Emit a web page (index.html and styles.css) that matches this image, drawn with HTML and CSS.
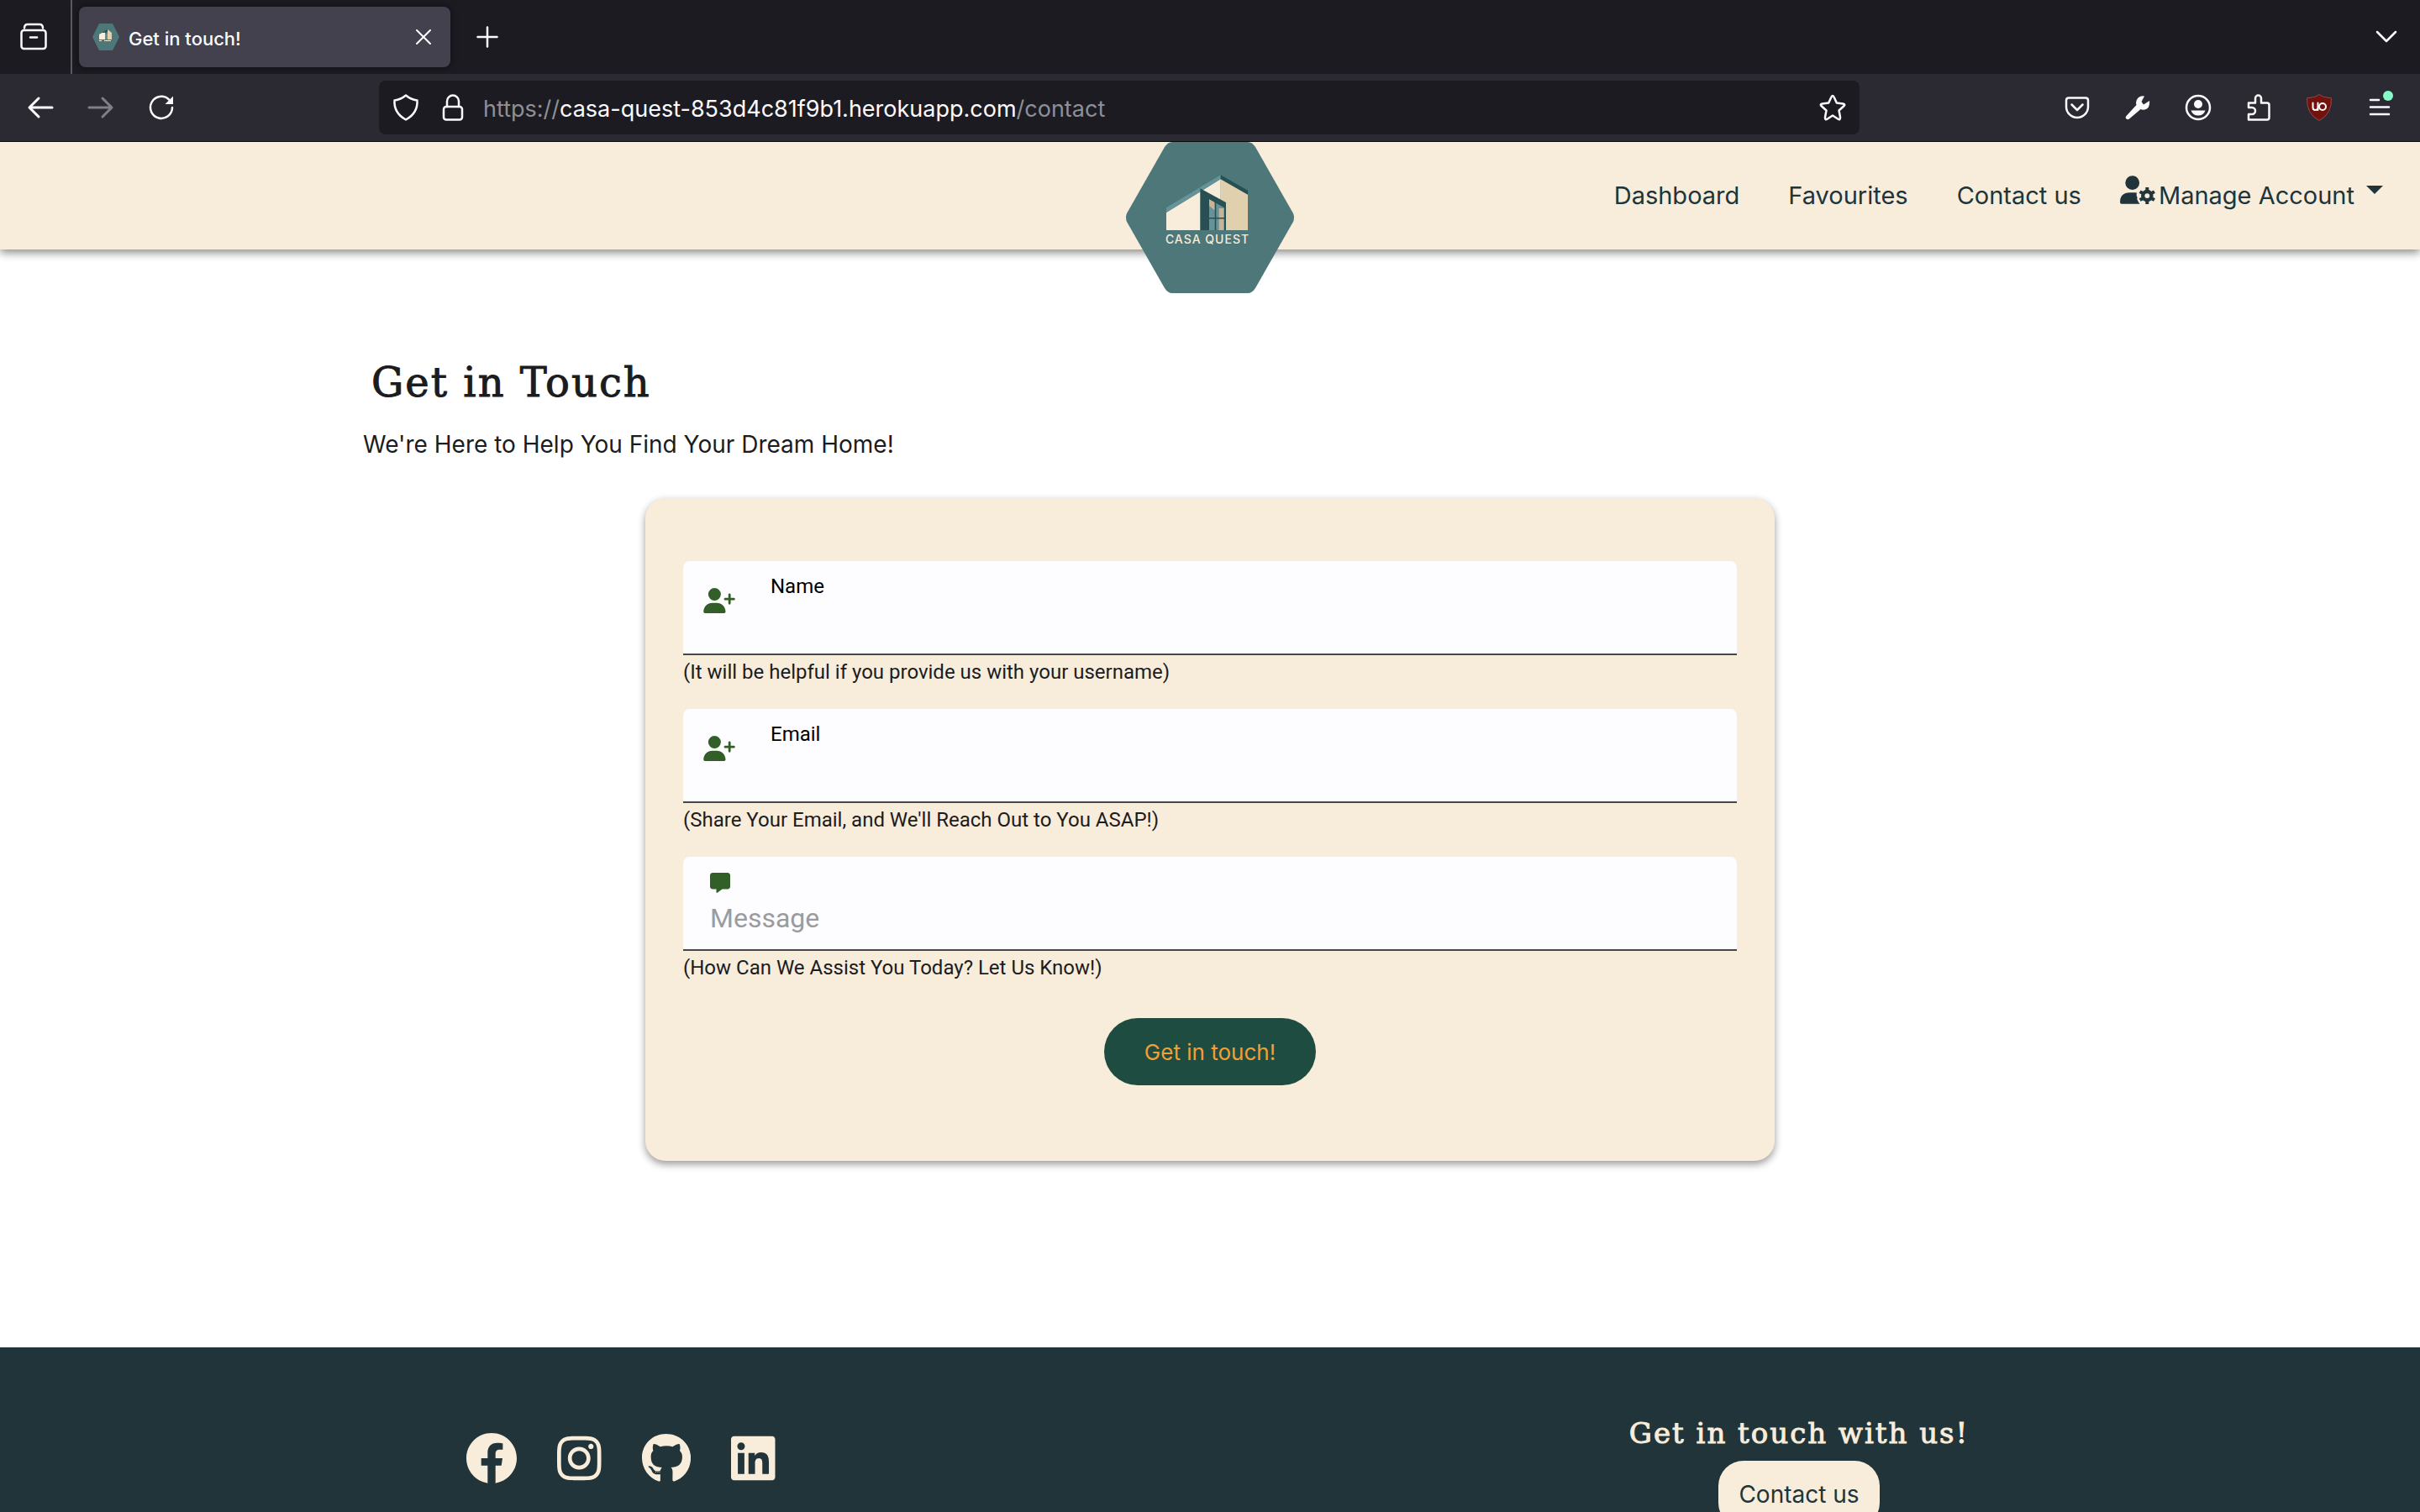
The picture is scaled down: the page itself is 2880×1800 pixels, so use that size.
FILE: index.html
```html
<!DOCTYPE html>
<html lang="en">
<head>
<meta charset="utf-8">
<meta name="viewport" content="width=device-width, initial-scale=1">
<title>Get in touch!</title>
<link rel="stylesheet" href="styles.css">
</head>
<body>
<div class="browser">
  <div class="tabstrip">
    <button class="view-button" type="button" aria-label="Recent browsing">
      <svg class="icon" viewBox="0 0 32 32"><path d="M5 5.500Q5 1 9 1h14q4 0 4 4.500"/><rect x="1.500" y="8" width="29" height="22" rx="3"/><path d="M12 16.500h8"/></svg>
    </button>
    <div class="tab">
      <svg class="favicon" viewBox="0 0 32 32"><path fill="#4e777a" d="M8 0h16l8 16-8 16H8L0 16z"/><path fill="#f8ecdb" d="M8 13l7-4v10H8zM8 20h3v1H8zM14 20h8v1h-8z"/><path fill="#284f52" d="M11 11l7-4v3l-4 1z"/><path fill="#5f8f95" d="M15 12h3v7h-3z"/><path fill="#e0d0ae" d="M18 7l5 4v8h-5z"/></svg>
      <span class="tab-title">Get in touch!</span>
      <button class="tab-close" type="button" aria-label="Close tab"><svg class="icon thin" viewBox="0 0 32 32"><path d="M8 8l16 16M24 8L8 24"/></svg></button>
    </div>
    <button class="new-tab" type="button" aria-label="New tab"><svg class="icon" viewBox="0 0 32 32"><path d="M16 4.500v23M4.500 16h23"/></svg></button>
    <button class="all-tabs" type="button" aria-label="List all tabs"><svg class="icon" viewBox="0 0 32 32"><path d="M5 10l11 11 11-11"/></svg></button>
  </div>
  <div class="toolbar">
    <button class="tool" type="button" aria-label="Back"><svg class="icon heavy" viewBox="0 0 32 32"><path d="M30 16H3M14 5L3 16l11 11"/></svg></button>
    <button class="tool" type="button" aria-label="Forward" disabled><svg class="icon heavy" viewBox="0 0 32 32"><path d="M2 16h27M18 5l11 11-11 11"/></svg></button>
    <button class="tool" type="button" aria-label="Reload"><svg class="icon" viewBox="0 0 32 32"><path d="M29 16a13 13 0 1 1-4-9.500"/><path class="solid" d="M30 2.500v9.500h-9.500z"/></svg></button>
    <div class="urlbar">
      <svg class="icon" viewBox="0 0 32 32"><path d="M16 1.500q6 5 13.500 6 1 15-13.500 23Q1.500 22.500 2.500 7.500 10 6.500 16 1.500z"/></svg>
      <svg class="icon lock" viewBox="0 0 32 32"><rect x="5" y="15" width="22" height="15.500" rx="3"/><path d="M9 15V8.500a7 7 0 0 1 14 0V15"/></svg>
      <span class="url">https://<b>casa-quest-853d4c81f9b1.herokuapp.com</b>/contact</span>
      <svg class="icon" viewBox="0 0 32 32"><path d="M16 2q1 0 1.800 2l3 6.500 7.700 1q3 .700.800 2.800l-5.800 5.200 1.500 8c.400 2.500-.800 3.200-2.500 2.200L16 25.500l-6.500 4.200c-1.700 1-2.900.300-2.500-2.200l1.500-8-5.800-5.200q-2.200-2.100.800-2.800l7.700-1 3-6.500Q15 2 16 2z"/></svg>
    </div>
    <button class="tool" type="button" aria-label="Save to Pocket"><svg class="icon" viewBox="0 0 32 32"><path d="M6 4.500h20q3 0 3 3V15a13 13 0 0 1-26 0V7.500q0-3 3-3z"/><path d="M9.500 12.500l6.500 6.500 6.500-6.500"/></svg></button>
    <button class="tool" type="button" aria-label="Developer tools"><svg class="icon" viewBox="0 0 32 32"><path class="solid" d="M24 2.500l-3.500 6.500 2.500 3.500L30 8q1 9-5.500 10.500-3 .500-5-.500L6 29.500q-2.500 1.500-4-.500-.800-1.500.500-3L14.500 13Q13 8 16.500 4.500 20 1.500 24 2.500z"/></svg></button>
    <button class="tool" type="button" aria-label="Account"><svg class="icon" viewBox="0 0 32 32"><circle cx="16" cy="16" r="14"/><circle class="solid" cx="16" cy="12" r="5"/><path class="solid" d="M7.500 19.500h17q-2 6-8.500 6t-8.500-6z"/></svg></button>
    <button class="tool" type="button" aria-label="Extensions"><svg class="icon" viewBox="0 0 32 32"><path d="M4 10.500h8V5a3.500 3.500 0 0 1 7 0v5.500h7q2.500 0 2.500 2.500v15q0 2.500-2.500 2.500H4V24h4a4 4 0 0 0 0-8H4z"/></svg></button>
    <button class="tool" type="button" aria-label="uBlock Origin"><svg class="icon thin" viewBox="0 0 32 32"><path class="badge" d="M16 .500q5 4 14.500 4 1 19-14.500 27Q.500 23.500 1.500 4.500 11 4.500 16 .500z"/><path d="M8.500 10.500v5.500q0 3 3 3t3-3v-5.500M14.500 10.500V19"/><circle cx="20" cy="15" r="4"/></svg></button>
    <button class="tool" type="button" aria-label="Open menu"><svg class="icon menu" viewBox="0 0 32 32"><path d="M5 7h10M5 15.500h22M5 24h22"/><circle cx="26" cy="2" r="6"/></svg></button>
  </div>

  <div class="viewport">
    <header class="navbar">
      <a class="brand" href="#">
        <svg viewBox="0 0 200 180" role="img" aria-label="Casa Quest">
          <path fill="#4e777a" d="M55 0h90q5 0 9 6l45 79q2 5 0 10l-45 79q-4 6-9 6H55q-5 0-9-6L1 95q-2-5 0-10L46 6q4-6 9-6z"/>
          <path fill="#f8ecdb" d="M48 84l40-24.500L112.700 44v61H48z"/>
          <path fill="#e0d0ae" d="M112.700 44L145 62.500V105h-32.300z"/>
          <path fill="#66939a" d="M48 78.300l64.700-39v5L48 84z"/>
          <path fill="#284f52" d="M112.700 39.300L145 57.700v5l-32.300-18.400z"/>
          <path fill="#284f52" d="M88.300 55.300L119 72v33H88.300z"/>
          <path fill="#66939a" d="M99 68.300l18 10V105H99z"/>
          <path fill="#c9b391" d="M99 68.300l6.700 3.700v9.500L99 76zM110.700 79h5.600v26h-5.600z"/>
          <path fill="#284f52" d="M105.700 70h1.600v35h-1.600zM99 90h18v1.400H99z"/>
          <text class="brand-name" x="97" y="121" text-anchor="middle">CASA QUEST</text>
        </svg>
      </a>
      <nav class="links">
        <a href="#">Dashboard</a>
        <a href="#">Favourites</a>
        <a href="#">Contact us</a>
        <a class="account" href="#">
          <svg class="account-icon" viewBox="0 0 640 512"><path d="M224 0a128 128 0 1 1 0 256 128 128 0 1 1 0-256zM178 304h92q20 0 36 4-18 50 8 84-10 30 6 60 14 34 40 60H30q-30 0-30-30 0-178 178-178z"/><circle cx="492" cy="364" r="78" fill="none" stroke="currentColor" stroke-width="66"/><path fill="none" stroke="currentColor" stroke-width="60" d="M492 212v50M492 466v50M360 288l44 25M580 415l44 25M360 440l44-25M580 313l44-25"/></svg>
          <span>Manage Account</span>
          <svg class="caret" viewBox="0 0 20 10"><path d="M0 0h20L10 10z"/></svg>
        </a>
      </nav>
    </header>

    <main class="page">
      <h1>Get in Touch</h1>
      <p class="lead">We're Here to Help You Find Your Dream Home!</p>
      <form class="card">
        <div class="field-group">
          <div class="field">
            <svg class="field-icon" viewBox="0 0 640 512"><path d="M224 0a128 128 0 1 1 0 256 128 128 0 1 1 0-256zM0 482.300C0 383.800 79.800 304 178.300 304h91.400C368.200 304 448 383.800 448 482.300c0 16.400-13.300 29.700-29.700 29.700H29.700C13.300 512 0 498.700 0 482.300zM504 312V248H440c-13.300 0-24-10.700-24-24s10.700-24 24-24h64V136c0-13.300 10.700-24 24-24s24 10.700 24 24v64h64c13.300 0 24 10.700 24 24s-10.700 24-24 24H552v64c0 13.300-10.700 24-24 24s-24-10.700-24-24z"/></svg>
            <div class="field-body"><label for="name">Name</label><input id="name" type="text"></div>
          </div>
          <p class="hint">(It will be helpful if you provide us with your username)</p>
        </div>
        <div class="field-group">
          <div class="field">
            <svg class="field-icon" viewBox="0 0 640 512"><path d="M224 0a128 128 0 1 1 0 256 128 128 0 1 1 0-256zM0 482.300C0 383.800 79.800 304 178.300 304h91.400C368.200 304 448 383.800 448 482.300c0 16.400-13.300 29.700-29.700 29.700H29.700C13.300 512 0 498.700 0 482.300zM504 312V248H440c-13.300 0-24-10.700-24-24s10.700-24 24-24h64V136c0-13.300 10.700-24 24-24s24 10.700 24 24v64h64c13.300 0 24 10.700 24 24s-10.700 24-24 24H552v64c0 13.300-10.700 24-24 24s-24-10.700-24-24z"/></svg>
            <div class="field-body"><label for="email">Email</label><input id="email" type="email"></div>
          </div>
          <p class="hint">(Share Your Email, and We'll Reach Out to You ASAP!)</p>
        </div>
        <div class="field-group">
          <div class="field message">
            <label for="message" aria-label="Message"><svg class="message-icon" viewBox="0 0 512 512"><path d="M64 0C28.700 0 0 28.700 0 64V352c0 35.300 28.700 64 64 64h96v80c0 6.100 3.400 11.600 8.800 14.300s11.900 2.100 16.800-1.500L309.300 416H448c35.300 0 64-28.700 64-64V64c0-35.300-28.700-64-64-64H64z"/></svg></label>
            <textarea id="message" rows="1" placeholder="Message"></textarea>
          </div>
          <p class="hint">(How Can We Assist You Today? Let Us Know!)</p>
        </div>
        <button class="submit" type="submit">Get in touch!</button>
      </form>
    </main>

    <footer class="footer">
      <div class="social">
        <a href="#" aria-label="Facebook"><svg viewBox="8 8 496 496"><path d="M504 256C504 119 393 8 256 8S8 119 8 256c0 123.780 90.690 226.380 209.250 245V327.690h-63V256h63v-54.640c0-62.150 37-96.480 93.670-96.480 27.140 0 55.520 4.840 55.520 4.840v61h-31.280c-30.800 0-40.410 19.120-40.410 38.730V256h68.780l-11 71.690h-57.780V501C413.310 482.380 504 379.780 504 256z"/></svg></a>
        <a href="#" aria-label="Instagram"><svg viewBox="0 0 448 512"><path d="M224.100 141c-63.600 0-114.900 51.300-114.900 114.900s51.300 114.900 114.900 114.900S339 319.500 339 255.900 287.700 141 224.100 141zm0 189.600c-41.100 0-74.700-33.500-74.700-74.700s33.500-74.700 74.700-74.700 74.700 33.500 74.700 74.700-33.600 74.700-74.700 74.700zm146.400-194.300c0 14.900-12 26.800-26.800 26.800-14.900 0-26.800-12-26.800-26.800s12-26.800 26.800-26.800 26.800 12 26.800 26.800zm76.100 27.200c-1.700-35.900-9.900-67.700-36.200-93.900-26.200-26.200-58-34.400-93.900-36.200-37-2.100-147.900-2.100-184.900 0-35.800 1.700-67.600 9.900-93.900 36.100s-34.400 58-36.200 93.900c-2.100 37-2.100 147.900 0 184.900 1.700 35.900 9.900 67.700 36.200 93.900s58 34.400 93.900 36.200c37 2.100 147.900 2.100 184.900 0 35.900-1.700 67.700-9.900 93.900-36.200 26.200-26.200 34.400-58 36.200-93.900 2.100-37 2.100-147.800 0-184.800zM398.800 388c-7.800 19.600-22.900 34.700-42.600 42.600-29.500 11.700-99.500 9-132.100 9s-102.700 2.600-132.100-9c-19.600-7.800-34.700-22.900-42.600-42.600-11.700-29.500-9-99.500-9-132.100s-2.600-102.700 9-132.100c7.800-19.600 22.900-34.700 42.600-42.600 29.500-11.700 99.500-9 132.100-9s102.700-2.600 132.100 9c19.600 7.800 34.700 22.900 42.600 42.600 11.700 29.500 9 99.500 9 132.100s2.700 102.700-9 132.100z"/></svg></a>
        <a href="#" aria-label="GitHub"><svg viewBox="0 0 496 512"><path d="M165.900 397.400c0 2-2.300 3.600-5.200 3.600-3.300.3-5.600-1.300-5.600-3.600 0-2 2.300-3.600 5.200-3.600 3-.3 5.600 1.300 5.600 3.600zm-31.100-4.500c-.7 2 1.300 4.300 4.300 4.900 2.600 1 5.600 0 6.200-2s-1.300-4.300-4.300-5.200c-2.600-.7-5.500.3-6.200 2.300zm44.200-1.700c-2.900.7-4.900 2.600-4.600 4.900.3 2 2.900 3.300 5.900 2.600 2.900-.7 4.900-2.600 4.600-4.600-.3-1.900-3-3.200-5.900-2.900zM244.800 8C106.100 8 0 113.300 0 252c0 110.900 69.800 205.800 169.500 239.200 12.800 2.300 17.300-5.600 17.300-12.100 0-6.200-.3-40.400-.3-61.400 0 0-70 15-84.700-29.800 0 0-11.400-29.100-27.800-36.600 0 0-22.900-15.700 1.600-15.400 0 0 24.900 2 38.600 25.800 21.900 38.600 58.600 27.500 72.900 20.900 2.300-16 8.800-27.100 16-33.700-55.900-6.200-112.300-14.300-112.300-110.500 0-27.500 7.600-41.300 23.600-58.900-2.600-6.500-11.100-33.300 2.600-67.900 20.900-6.500 69 27 69 27 20-5.600 41.500-8.500 62.800-8.500s42.800 2.900 62.800 8.500c0 0 48.100-33.600 69-27 13.700 34.700 5.200 61.400 2.600 67.900 16 17.700 25.800 31.500 25.800 58.900 0 96.500-58.900 104.200-114.800 110.500 9.200 7.900 17 22.900 17 46.400 0 33.700-.3 75.400-.3 83.600 0 6.500 4.600 14.400 17.300 12.100C428.200 457.800 496 362.900 496 252 496 113.300 383.500 8 244.800 8z"/></svg></a>
        <a href="#" aria-label="LinkedIn"><svg viewBox="0 0 448 512"><path d="M416 32H31.900C14.300 32 0 46.500 0 64.300v383.400C0 465.500 14.300 480 31.900 480H416c17.600 0 32-14.500 32-32.300V64.300c0-17.800-14.400-32.300-32-32.300zM135.400 416H69V202.200h66.500V416zm-33.200-243c-21.300 0-38.500-17.300-38.500-38.500S80.900 96 102.200 96c21.200 0 38.500 17.300 38.500 38.500 0 21.300-17.200 38.500-38.500 38.500zm282.100 243h-66.400V312c0-24.800-.5-56.700-34.500-56.700-34.600 0-39.900 27-39.900 54.900V416h-66.400V202.200h63.700v29.200h.9c8.900-16.800 30.600-34.500 62.900-34.500 67.200 0 79.700 44.300 79.700 101.900V416z"/></svg></a>
      </div>
      <div class="contact">
        <h2>Get in touch with us!</h2>
        <a class="contact-button" href="#">Contact us</a>
      </div>
    </footer>
  </div>
</div>
</body>
</html>
```
FILE: styles.css
```css
*, *::before, *::after { box-sizing: border-box; }

body {
  margin: 0;
  font-family: Inter, "Liberation Sans", sans-serif;
  font-size: 28px;
  color: #1b1c1e;
  background: #fff;
}

a { color: inherit; text-decoration: none; }
h1, h2, p { margin: 0; font-weight: 400; }
button, input, textarea { font: inherit; color: inherit; border: 0; background: none; padding: 0; }
svg { display: block; }

/* Browser window */
.browser {
  display: flex;
  flex-direction: column;
  height: 100vh;
  overflow: hidden;
}

.tabstrip {
  display: flex;
  align-items: center;
  flex: none;
  height: 88px;
  padding-right: 24px;
  color: #fbfbfe;
  background: #1c1b22;
}

.icon {
  flex: none;
  width: 32px;
  height: 32px;
  overflow: visible;
  fill: none;
  stroke: currentColor;
  stroke-width: 2.5;
  stroke-linecap: round;
  stroke-linejoin: round;
}
.icon.thin { stroke-width: 2; }
.icon.heavy { stroke-width: 3; }
.icon .solid { fill: currentColor; stroke: none; }
.icon .badge { fill: #73110c; stroke: #8c4a4a; stroke-width: 1; }
.icon.menu circle { fill: #86fbc8; stroke: none; }

.view-button {
  display: flex;
  align-items: center;
  height: 100%;
  padding: 0 28px 0 24px;
  border-right: 2px solid #5b5a62;
}

.tab {
  display: flex;
  align-items: center;
  width: 442px;
  height: 72px;
  margin: 0 28px 0 8px;
  padding: 0 16px;
  border-radius: 8px;
  background: #42414d;
  box-shadow: 0 0 8px rgba(0, 0, 0, .5);
}
.favicon { flex: none; width: 32px; height: 32px; }
.tab-title { flex: 1; margin: 4px 0 0 11px; font-size: 22px; font-weight: 500; line-height: 32px; }
.all-tabs { margin-left: auto; }

.toolbar {
  display: flex;
  align-items: center;
  flex: none;
  height: 81px;
  padding: 0 12px;
  color: #fbfbfe;
  background: #2b2a33;
  border-bottom: 1px solid #0c0c0d;
}
.tool {
  display: flex;
  align-items: center;
  justify-content: center;
  flex: none;
  width: 72px;
  height: 64px;
}
.tool:disabled { color: #807f86; }

.urlbar {
  display: flex;
  align-items: center;
  flex: 1;
  height: 64px;
  margin: 0 223px;
  padding: 0 16px;
  border-radius: 8px;
  background: #1c1b22;
}
.lock { margin: 0 20px 0 24px; }
.url { flex: 1; padding-top: 3px; font-size: 27px; line-height: 40px; color: #8f8f94; }
.url b { font-weight: 400; color: #fbfbfe; }

/* Web page */
.viewport { flex: 1; min-height: 0; overflow: hidden; }

.navbar {
  position: relative;
  display: flex;
  align-items: center;
  justify-content: flex-end;
  height: 128px;
  padding: 0 44px;
  color: #203439;
  background: #f8ecdb;
  box-shadow: 0 4px 10px rgba(0, 0, 0, .45);
}
.brand {
  position: absolute;
  top: 0;
  left: 50%;
  width: 200px;
  margin-left: -100px;
}
.brand-name { font-size: 14px; font-weight: 500; letter-spacing: 1px; fill: #f8ecdb; }

.links { display: flex; align-items: center; gap: 58px; font-size: 29px; line-height: 40px; }
.account { display: flex; align-items: center; gap: 4px; margin-left: -12px; }
.account-icon { width: 42px; height: 34px; margin-bottom: 14px; fill: currentColor; overflow: visible; }
.caret { width: 20px; height: 10px; margin: 0 0 14px 10px; fill: currentColor; }

.page { width: 70%; margin: 0 auto; padding: 122px 0 222px; }

h1, h2 {
  font-family: "DejaVu Serif", serif;
  letter-spacing: 2px;
  -webkit-text-stroke: 1px currentColor;
}
h1 { padding-left: 10px; font-size: 48px; line-height: 72px; }
.lead { margin-top: 18px; line-height: 40px; }

.card {
  width: 66.667%;
  margin: 44px auto 0;
  padding: 75px 45px 90px;
  border-radius: 24px;
  background: #f8ecdb;
  box-shadow: 0 4px 10px rgba(0, 0, 0, .4);
}
.field-group { height: 176px; }
.field {
  display: flex;
  height: 112px;
  padding: 14px 24px 0;
  border-bottom: 2px solid #42474e;
  border-radius: 8px 8px 0 0;
  background: #fdfcff;
}
.field-icon { flex: none; width: 38px; height: 30px; margin-top: 18px; fill: #315f27; }
.field-body { display: flex; flex: 1; flex-direction: column; margin-left: 42px; }
.field-body label { font-family: Roboto, sans-serif; font-size: 24px; line-height: 32px; color: #000; }
.field-body input { width: 100%; height: 48px; outline: 0; }
.hint { padding-top: 4px; font-family: Roboto, sans-serif; font-size: 24px; line-height: 32px; }

.field.message { flex-direction: column; padding: 19px 32px 0; }
.message-icon { width: 24px; height: 24px; fill: #315f27; }
.field.message textarea {
  width: 100%;
  height: 40px;
  margin-top: 10px;
  font-family: Roboto, sans-serif;
  font-size: 32px;
  line-height: 40px;
  resize: none;
  outline: 0;
  overflow: hidden;
}
textarea::placeholder { color: #9b9b9e; opacity: 1; }

.submit {
  display: block;
  height: 80px;
  margin: 16px auto 0;
  padding: 0 48px;
  border-radius: 40px;
  font-size: 26px;
  color: #f29f33;
  background: #1f4c41;
}

.footer {
  display: grid;
  grid-template-columns: 1fr 1fr;
  justify-items: center;
  align-items: start;
  padding: 78px 38px;
  color: #f8ecdb;
  background: #203439;
}
.social { display: flex; gap: 48px; margin-top: 24px; }
.social svg { height: 60px; fill: currentColor; }
.contact { display: flex; flex-direction: column; align-items: center; }
h2 { font-size: 34px; line-height: 48px; }
.contact-button {
  margin-top: 9px;
  padding: 20px 24px;
  border-radius: 30px;
  line-height: 40px;
  color: #203439;
  background: #f8ecdb;
}
```
